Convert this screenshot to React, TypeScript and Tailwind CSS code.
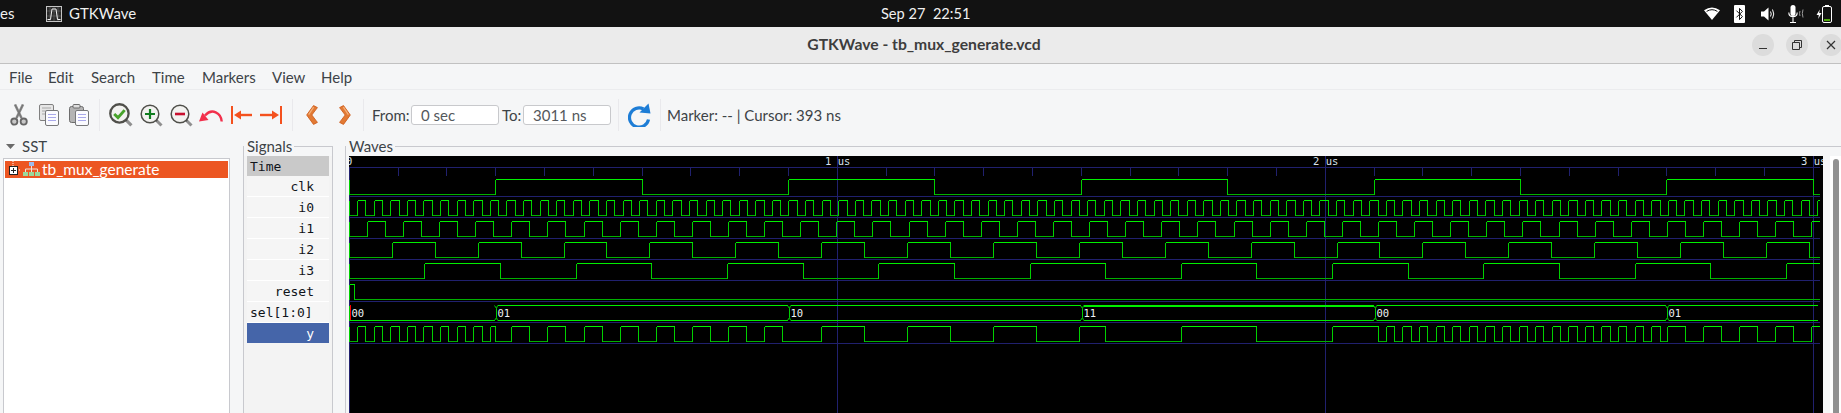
import React from "react";

const ui = "[font-family:Lato,'Noto_Sans',sans-serif]";
const mono = "[font-family:'DejaVu_Sans_Mono',monospace]";

const END = 3011;
const X = (t: number) => Math.floor(349 + t * 0.488 + 0.3) + 0.5;
const toggle = (half: number) => (t: number) => Math.floor(t / half) % 2 === 1;
const clk = toggle(300);
const i0 = toggle(17);
const i1 = toggle(37);
const i2 = toggle(88);
const i3 = toggle(155);
const reset = (t: number) => t < 11;
const selAt = (t: number) => (t < 300 ? 0 : Math.floor((t - 300) / 600 + 1) % 4);
const muxY = (t: number) => [i0, i1, i2, i3][selAt(t)](t);

function Trace({ fn, hi, lo }: { fn: (t: number) => boolean; hi: number; lo: number }) {
  const H = hi + 0.5;
  const L = lo + 0.5;
  let high = "";
  let low = "";
  let vert = `M349.5 ${H}V${L}`;
  let start = 0;
  let cur = fn(0);
  for (let t = 1; t <= END; t++) {
    const v = fn(t);
    if (v !== cur || t === END) {
      const x2 = t === END ? 1820 : X(t);
      const seg = `M${X(start)} ${cur ? H : L}H${x2}`;
      if (cur) high += seg;
      else low += seg;
      if (t !== END) vert += `M${x2} ${H}V${L}`;
      start = t;
      cur = v;
    }
  }
  return (
    <g fill="none" strokeWidth={1}>
      <path d={low} stroke="#00b000" />
      <path d={vert} stroke="#00d000" />
      <path d={high} stroke="#00f000" />
    </g>
  );
}

function Bus() {
  const H = 305.5;
  const L = 320.5;
  const changes = [
    { t: 0, label: "00" },
    { t: 300, label: "01" },
    { t: 900, label: "10" },
    { t: 1500, label: "11" },
    { t: 2100, label: "00" },
    { t: 2700, label: "01" },
  ];
  return (
    <g fill="none">
      {changes.map((c, i) => {
        const a = X(c.t) + (i === 0 ? 0 : 2);
        const b = i + 1 < changes.length ? X(changes[i + 1].t) - 1 : 1818;
        return (
          <g key={i}>
            {i > 0 && <path d={`M${a - 3} ${H}L${a - 1} ${H + 3}V${L - 3}L${a - 3} ${L}M${a} ${H}L${a - 1} ${H + 3}M${a - 1} ${L - 3}L${a} ${L}`} stroke="#00d000" shapeRendering="auto" />}
            {i > 0 || <path d={`M349.5 ${H}V${L}`} stroke="#00d000" />}
            {i !== 0 && <path d={`M${a} ${H}H${b}`} stroke="#00f000" strokeWidth={c.label === "11" ? 2 : 1} />}
            <path d={`M${a} ${L}H${b}`} stroke="#00f000" />
            <text x={i === 0 ? 351.5 : X(c.t) + 2} y={317} fontSize={10.5} fill="#eef2f5" stroke="none" className={mono}>
              {c.label}
            </text>
          </g>
        );
      })}
      <path d="M350.5 305V320" stroke="#ff0000" />
    </g>
  );
}

function Waves() {
  const rows = [167, 196, 217, 238, 259, 280, 301, 322, 343];
  const ticks: number[] = [];
  for (let t = 100; t < 3000; t += 100) if (t % 1000 !== 0) ticks.push(t);
  return (
    <svg viewBox="349 156 1474 257" width={1474} height={257} shapeRendering="crispEdges" className="block bg-black shrink-0">
      {rows.map((y) => (
        <path key={y} d={`M349 ${y + 0.5}H1820`} stroke="#20206e" />
      ))}
      {ticks.map((t) => (
        <path key={t} d={`M${X(t)} 167V176`} stroke="#20206e" />
      ))}
      {[0, 1000, 2000, 3000].map((t) => (
        <path key={t} d={`M${X(t)} ${t === 0 ? 167 : 156}V413`} stroke="#20206e" />
      ))}
      <Trace fn={clk} hi={179} lo={194} />
      <Trace fn={i0} hi={200} lo={215} />
      <Trace fn={i1} hi={221} lo={236} />
      <Trace fn={i2} hi={242} lo={257} />
      <Trace fn={i3} hi={263} lo={278} />
      <Trace fn={reset} hi={284} lo={299} />
      <Bus />
      <Trace fn={muxY} hi={326} lo={341} />
      <g fontSize={10.5} fill="#d8e0ea" className={mono} shapeRendering="auto">
        <text x={346} y={165}>0</text>
        <text x={825} y={165}>1 us</text>
        <text x={1313} y={165}>2 us</text>
        <text x={1801} y={165}>3 us</text>
      </g>
    </svg>
  );
}

const Sep = ({ ml }: { ml: string }) => <div className={`w-px h-[32px] bg-[#e9e9ec] ${ml}`} />;

const PageFront = () => (
  <g>
    <rect x="6.5" y="6.5" width="13" height="15" rx="1.5" fill="#fbfbff" stroke="#77787a" />
    <path d="M9 10.5h8M9 13.5h8M9 16.5h8" stroke="#a9a9ea" />
  </g>
);

function Scissors({ className }: { className: string }) {
  return (
    <svg viewBox="0 0 18 22" width={18} height={22} className={className}>
      <path d="M5 0.5L11.5 14M13 0.5L6.5 14" stroke="#8b8b8b" strokeWidth={2.6} fill="none" />
      <path d="M5 0.5L11.5 14M13 0.5L6.5 14" stroke="#5f5f5f" strokeWidth={0.5} fill="none" />
      <circle cx="4.3" cy="17.6" r="3.1" fill="#c8c8c8" stroke="#666" strokeWidth={1.8} />
      <circle cx="13.7" cy="17.6" r="3.1" fill="#c8c8c8" stroke="#666" strokeWidth={1.8} />
    </svg>
  );
}

function Copy({ className }: { className: string }) {
  return (
    <svg viewBox="0 0 20 22" width={20} height={22} className={className}>
      <rect x="0.5" y="0.5" width="14" height="16" rx="1.5" fill="#e6e6e6" stroke="#808080" />
      <path d="M3 4h9M3 7h9M3 10h3" stroke="#a8a8a8" />
      <PageFront />
    </svg>
  );
}

function Paste({ className }: { className: string }) {
  return (
    <svg viewBox="0 0 20 22" width={20} height={22} className={className}>
      <rect x="0.5" y="2.5" width="14" height="16" rx="2" fill="#b4b4b4" stroke="#6d6d6d" />
      <rect x="4" y="0.5" width="7" height="3.5" rx="1" fill="#dedede" stroke="#6d6d6d" />
      <PageFront />
    </svg>
  );
}

function Lens({ className, children, w }: { className: string; children: React.ReactNode; w: number }) {
  return (
    <svg viewBox="0 0 23 23" width={w} height={w} className={className}>
      <path d="M15.5 15.5L21.5 21.5" stroke="#8f8f8f" strokeWidth={3} />
      <path d="M15 15L17 17" stroke="#444" strokeWidth={2} />
      <circle cx="10" cy="10" r="8.8" fill="#f2f2f0" stroke="#4f4f4a" strokeWidth={w > 23 ? 2.2 : 1.5} />
      {children}
    </svg>
  );
}

function Undo({ className }: { className: string }) {
  return (
    <svg viewBox="0 0 24 13" width={24} height={13} className={className}>
      <path d="M22.7 12.5C22 4 13 -1.5 6 6.5" fill="none" stroke="#f2304c" strokeWidth={2.4} />
      <path d="M0 12.5L9.5 11L3.5 3.5Z" fill="#f2304c" />
    </svg>
  );
}

function ArrowLeft({ className }: { className: string }) {
  return (
    <svg viewBox="0 0 21 18" width={21} height={18} className={className}>
      <path d="M0 0h2v18H0z" fill="#f4511e" />
      <path d="M6 9h15" stroke="#f4511e" strokeWidth={2.4} />
      <path d="M3 9L10 4.5V13.5Z" fill="#f4511e" />
    </svg>
  );
}

function ArrowRight({ className }: { className: string }) {
  return (
    <svg viewBox="0 0 22 18" width={22} height={18} className={className}>
      <path d="M20 0h2v18h-2z" fill="#f4511e" />
      <path d="M0 9h15" stroke="#f4511e" strokeWidth={2.4} />
      <path d="M19 9L12 4.5V13.5Z" fill="#f4511e" />
    </svg>
  );
}

function Chevron({ className, flip }: { className: string; flip?: boolean }) {
  return (
    <svg viewBox="0 0 12 20" width={12} height={20} className={className}>
      <g transform={flip ? "translate(12,0) scale(-1,1)" : undefined}>
        <path d="M7.5 0.6L11.4 2.6L5.8 10L11.4 17.4L7.5 19.4L0.7 10Z" fill="#e27a34" stroke="#cf5f1e" strokeWidth={0.9} strokeLinejoin="round" />
        <path d="M7.6 2.2L2.6 9.6" stroke="#f4b27c" strokeWidth={1.2} />
      </g>
    </svg>
  );
}

function Reload({ className }: { className: string }) {
  return (
    <svg viewBox="0 0 23 24" width={23} height={24} className={className}>
      <path d="M20.5 16.5A9.6 9.6 0 1 1 15.5 6" fill="none" stroke="#1d7dd6" strokeWidth={3.2} />
      <path d="M11.5 9.5L22.5 10.5L20.5 0.5Z" fill="#1d7dd6" />
    </svg>
  );
}

const Entry = ({ children, ml }: { children: React.ReactNode; ml: string }) => (
  <div className={`w-[88px] h-[20px] bg-white border border-[#c8c9cc] rounded-[3px] flex items-center pl-[9px] text-[15px] text-[#54585c] ${ml}`}>{children}</div>
);

const menu: [string, string][] = [
  ["File", "w-[39px]"],
  ["Edit", "w-[43px]"],
  ["Search", "w-[61px]"],
  ["Time", "w-[50px]"],
  ["Markers", "w-[70px]"],
  ["View", "w-[49px]"],
  ["Help", "w-[40px]"],
];

const signals: [string, string][] = [
  ["clk", "justify-end"],
  ["i0", "justify-end"],
  ["i1", "justify-end"],
  ["i2", "justify-end"],
  ["i3", "justify-end"],
  ["reset", "justify-end"],
  ["sel[1:0]", "justify-start"],
];

function StatusIcons() {
  return (
    <div className="ml-auto flex items-center pr-[9px]">
      <svg viewBox="0 0 16 13" width={16} height={13}>
        <path d="M0 3.2Q8 -2.4 16 3.2L8 13Z" fill="#fff" />
        <path d="M2.6 4.4Q8 1 13.4 4.4" stroke="#121212" strokeWidth={1} fill="none" />
      </svg>
      <svg viewBox="0 0 11 18" width={11} height={18} className="ml-[14px]">
        <rect width="11" height="18" rx="1" fill="#fff" />
        <path d="M2.4 5.6L8.4 11.6L5.5 14.6V3.4L8.4 6.4L2.4 12.4" fill="none" stroke="#121212" strokeWidth={1} />
      </svg>
      <svg viewBox="0 0 14 14" width={14} height={14} className="ml-[16px]">
        <path d="M0 4.5H3L7.5 0.5V13.5L3 9.5H0Z" fill="#fff" />
        <path d="M9.5 4.5Q11 7 9.5 9.5M11.5 2.5Q14 7 11.5 11.5" stroke="#fff" fill="none" strokeWidth={1} />
      </svg>
      <svg viewBox="0 0 16 18" width={16} height={18} className="ml-[13px]">
        <rect x="2.5" y="0" width="5" height="11" rx="2.5" fill="#fff" />
        <path d="M0.8 7.5C0.8 13 9.2 13 9.2 7.5M5 12.5V17M2 17.5H8" stroke="#fff" fill="none" strokeWidth={1.1} />
        <path d="M12 6Q11 8.5 12 11M15 4.5Q13.6 8.5 15 12.5" stroke="#9a9a9a" fill="none" strokeWidth={1} />
      </svg>
      <svg viewBox="0 0 16 18" width={16} height={18} className="ml-[12px]">
        <rect x="6.5" y="1.5" width="9" height="16" rx="1.5" fill="none" stroke="#fff" />
        <rect x="9" y="0" width="4" height="1.5" fill="#fff" />
        <rect x="8" y="14" width="6" height="2" fill="#4ea80a" />
        <path d="M3.8 4.5L0.5 10H2.8L2.2 14L5.5 8H3.2Z" fill="#fff" />
      </svg>
    </div>
  );
}

const WindowButton = ({ children, ml }: { children: React.ReactNode; ml?: string }) => (
  <div className={`w-[22px] h-[22px] rounded-full bg-[#dcdcdc] flex items-center justify-center ${ml ?? ""}`}>{children}</div>
);

export default function App() {
  return (
    <div className={`w-[1841px] h-[413px] overflow-hidden flex flex-col bg-[#f5f6f7] text-[#3d4347] ${ui}`}>
      <div className="h-[27px] bg-[#121212] text-[#f0f0f0] flex items-center text-[15px] shrink-0">
        <span className="w-[46px]">es</span>
        <svg viewBox="0 0 16 16" width={16} height={16}>
          <rect x="0.5" y="0.5" width="15" height="15" fill="#2a2a2a" stroke="#c4c4c4" />
          <path d="M4 1V15M8 1V15M12 1V15M1 5H15M1 10H15" stroke="#6a6a6a" strokeWidth={0.6} />
          <path d="M1.5 13.5H4.5L6 3H10L11.5 13.5H14.5" fill="none" stroke="#f0f0f0" strokeWidth={1} />
        </svg>
        <span className="w-[61px] ml-[7px] whitespace-nowrap">GTKWave</span>
        <span className="ml-[751px] whitespace-pre text-[14.6px]">{"Sep 27  22:51"}</span>
        <StatusIcons />
      </div>

      <div className="h-[37px] bg-[#ebebeb] border-b border-[#c1c1c1] flex items-center shrink-0">
        <div className="flex-1" />
        <span className="font-bold text-[15.7px] text-[#3d3d3d] whitespace-nowrap pl-[6px]">GTKWave - tb_mux_generate.vcd</span>
        <div className="flex-1 flex justify-end items-center mr-[-1px]">
          <WindowButton>
            <div className="w-[8px] h-[1.5px] bg-[#333] mt-[7px]" />
          </WindowButton>
          <WindowButton ml="ml-[12px]">
            <svg viewBox="0 0 10 10" width={10} height={10}>
              <path d="M0.5 2.5H7.5V9.5H0.5ZM2.5 2.5V0.5H9.5V7.5H7.5" fill="none" stroke="#333" />
            </svg>
          </WindowButton>
          <WindowButton ml="ml-[12px]">
            <svg viewBox="0 0 10 10" width={10} height={10}>
              <path d="M1 1L9 9M9 1L1 9" stroke="#333" strokeWidth={1.2} />
            </svg>
          </WindowButton>
        </div>
      </div>

      <div className="h-[26px] border-b border-[#ebecee] flex items-center pl-[9px] pt-px text-[15px] shrink-0">
        {menu.map(([m, w]) => (
          <span key={m} className={`${w} whitespace-nowrap`}>
            {m}
          </span>
        ))}
      </div>

      <div className="h-[50px] flex items-center pl-[10px] shrink-0 text-[15px]">
        <Scissors className="shrink-0" />
        <Copy className="ml-[11px] shrink-0" />
        <Paste className="ml-[10px] shrink-0" />
        <Sep ml="ml-[10px]" />
        <Lens w={24} className="ml-[9px] shrink-0">
          <path d="M5 10.5L8.6 14L15 6.8" fill="none" stroke="#47a32a" strokeWidth={2.8} />
        </Lens>
        <Lens w={23} className="ml-[7px] shrink-0">
          <path d="M10 5V15M5 10H15" stroke="#0f7d1f" strokeWidth={2.2} />
        </Lens>
        <Lens w={23} className="ml-[7px] shrink-0">
          <path d="M5 10H15" stroke="#c9102f" strokeWidth={2.6} />
        </Lens>
        <Undo className="ml-[6px] shrink-0" />
        <ArrowLeft className="ml-[8px] shrink-0" />
        <ArrowRight className="ml-[8px] shrink-0" />
        <Sep ml="ml-[10px]" />
        <Chevron className="ml-[13px] shrink-0" />
        <Chevron flip className="ml-[21px] shrink-0" />
        <Sep ml="ml-[12px]" />
        <span className="w-[37px] ml-[8px] whitespace-nowrap">From:</span>
        <Entry ml="ml-[2px]">0 sec</Entry>
        <span className="w-[19px] ml-[3px] whitespace-nowrap">To:</span>
        <Entry ml="ml-[2px]">3011 ns</Entry>
        <Sep ml="ml-[7px]" />
        <Reload className="ml-[9px] shrink-0" />
        <Sep ml="ml-[9px]" />
        <span className="ml-[6px] whitespace-nowrap">Marker: -- | Cursor: 393 ns</span>
      </div>

      <div className="flex-1 flex min-h-0 text-[15px]">
        <div className="w-[243px] shrink-0 flex flex-col">
          <div className="h-[20px] flex items-start pl-[6px] mt-[-2px]">
            <svg viewBox="0 0 9 5" width={9} height={5} className="mt-[6px]">
              <path d="M0 0H9L4.5 5Z" fill="#6a6a6a" />
            </svg>
            <span className="ml-[7px] leading-[16px]">SST</span>
          </div>
          <div className="flex-1 ml-[3px] w-[227px] border-x border-t border-[#c8c9ce] bg-white pt-[2px] pl-px pr-px">
            <div className="h-[17px] bg-[#ec5622] text-white flex items-center text-[15.5px]">
              <svg viewBox="0 0 36 17" width={36} height={17} className="shrink-0">
                <path d="M8 0V5M12 9H16" stroke="#fff" strokeDasharray="1 1" />
                <rect x="4.5" y="5.5" width="8" height="8" fill="#fff" stroke="#222" />
                <path d="M6 9.5H11M8.5 7V12" stroke="#222" />
                <rect x="24" y="1" width="5" height="4" fill="#9dbbec" />
                <path d="M26.5 5V8M20.5 11V8H32.5V11M26.5 8V11" stroke="#f3e3d8" fill="none" />
                <rect x="18" y="11" width="5" height="4" fill="#9ad89a" />
                <rect x="24" y="11" width="5" height="4" fill="#9ad89a" />
                <rect x="30" y="11" width="5" height="4" fill="#9ad89a" />
              </svg>
              <span className="ml-px whitespace-nowrap">tb_mux_generate</span>
            </div>
          </div>
        </div>

        <div className="w-[90px] shrink-0 flex flex-col">
          <div className="h-[16px] flex items-start">
            <div className="w-px h-[10px] mt-[6px] bg-[#c8c9ce]" />
            <span className="ml-[3px] whitespace-nowrap leading-[13px]">Signals</span>
            <div className="flex-1 h-px mt-[6px] bg-[#c8c9ce] ml-[2px]" />
            <div className="w-px h-[10px] mt-[6px] bg-[#c8c9ce]" />
          </div>
          <div className={`flex-1 border-x border-[#c8c9ce] bg-[#f3f3f3] px-[3px] ${mono} text-[13px] text-[#10141a]`}>
            <div className="h-[20px] bg-[#c9c9c9] flex items-center pl-[3px] pt-px">Time</div>
            {signals.map(([s, j]) => (
              <div key={s} className={`h-[21px] bg-[#f5f5f5] border-b border-white flex items-center ${j} pl-[3px] pr-[15px] pt-px`}>
                {s}
              </div>
            ))}
            <div className="h-[20px] bg-[#4565a9] text-white flex items-center justify-end pr-[15px] pt-px">y</div>
          </div>
        </div>

        <div className="w-[12px] shrink-0" />

        <div className="flex-1 flex flex-col min-w-0">
          <div className="h-[16px] flex items-start">
            <div className="w-px h-[10px] mt-[6px] bg-[#c8c9ce]" />
            <span className="ml-[3px] whitespace-nowrap leading-[13px]">Waves</span>
            <div className="flex-1 h-px mt-[6px] bg-[#c8c9ce] ml-[2px]" />
          </div>
          <div className="flex-1 flex border-l border-[#c8c9ce] pl-[3px] min-h-0">
            <Waves />
            <div className="w-[7px] shrink-0" />
            <div className="w-[11px] shrink-0 bg-white pl-[3px] pt-[3px]">
              <div className="w-[6px] h-full bg-[#919191] rounded-t-[3px]" />
            </div>
          </div>
        </div>
      </div>
    </div>
  );
}
